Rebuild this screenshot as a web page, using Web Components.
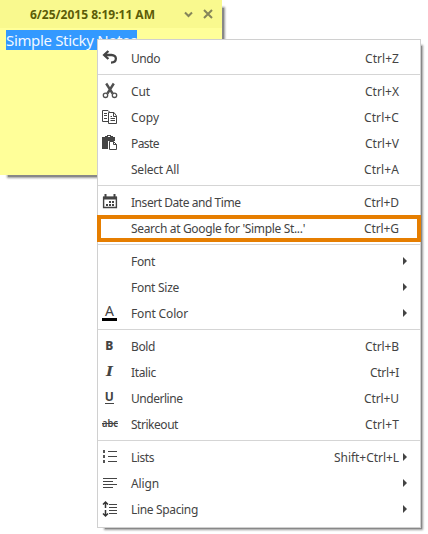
<!DOCTYPE html>
<html lang="en"><head><meta charset="utf-8"><title>Simple Sticky Notes</title>
<style>
body{margin:0;background:#fff;width:428px;height:534px;overflow:hidden;position:relative;font-family:"Noto Sans","Open Sans",sans-serif;color:#444}
context-menu{position:absolute;left:97px;top:39px}
</style></head><body>
<sticky-note heading="6/25/2015 8:19:11 AM" w="125"><span>Simple Sticky Notes</span></sticky-note>
<context-menu>
<menu-row icon="undo" keys="Ctrl+Z" w="29" kw="34">Undo</menu-row>
<menu-line></menu-line>
<menu-row icon="cut" keys="Ctrl+X" w="19" kw="34">Cut</menu-row>
<menu-row icon="copy" keys="Ctrl+C" w="28" kw="35">Copy</menu-row>
<menu-row icon="paste" keys="Ctrl+V" w="28" kw="34">Paste</menu-row>
<menu-row keys="Ctrl+A" w="48" kw="35">Select All</menu-row>
<menu-line></menu-line>
<menu-row icon="calendar" keys="Ctrl+D" w="109.5" kw="35">Insert Date and Time</menu-row>
<menu-row class="hot" keys="Ctrl+G" w="174" kw="35">Search at Google for 'Simple St...'</menu-row>
<menu-line></menu-line>
<menu-row sub w="24">Font</menu-row>
<menu-row sub w="48">Font Size</menu-row>
<menu-row sub icon="color" w="57">Font Color</menu-row>
<menu-line></menu-line>
<menu-row icon="bold" keys="Ctrl+B" w="24" kw="34">Bold</menu-row>
<menu-row icon="italic" keys="Ctrl+I" w="25" kw="29">Italic</menu-row>
<menu-row icon="underline" keys="Ctrl+U" w="51.5" kw="35">Underline</menu-row>
<menu-row icon="strike" keys="Ctrl+T" w="47" kw="34">Strikeout</menu-row>
<menu-line></menu-line>
<menu-row sub icon="lists" keys="Shift+Ctrl+L" w="23" kw="65">Lists</menu-row>
<menu-row sub icon="align" w="28">Align</menu-row>
<menu-row sub icon="spacing" w="67">Line Spacing</menu-row>
</context-menu>
<script>
const ICONS={
undo:'<path d="M8.4 6 4.2 10l4.2 4" fill="none" stroke="#444" stroke-width="2.4"/><path d="M4.5 10H11.5C17.4 10 17.4 17.600 11 17.600" fill="none" stroke="#444" stroke-width="2.3"/>',
cut:'<g fill="none" stroke="#505050"><path d="M6.2 5.500 12.600 15.500M13.800 5.500 7.400 15.500" stroke-width="2.4"/><circle cx="5.500" cy="17.300" r="2.200" stroke-width="1.3"/><circle cx="14.500" cy="17.300" r="2.200" stroke-width="1.3"/></g>',
copy:'<g fill="none" stroke="#444"><path d="M8 17.500H2.500V6.500H8L10.500 9M4 9.500H7M4 11.500H7M4 14.500H7"/><path d="M8.500 8.500H14L16.500 12V19.500H8.500ZM13.500 8.500V12.500H17M10.500 12.500H12M10.500 14.500H15M10.500 16.500H15"/></g>',
paste:'<path d="M2 7h3v2h8V7h2v4H8v8H2z" fill="#444"/><path d="M5 6h2V5h4v1h2v3H5z" fill="#444"/><path d="M8 6h2v1H8z" fill="#fff"/><path d="M9.500 11.500H13.500l3 3v5H9.500zM13.500 11.500V14.500H16.500" fill="#fff" stroke="#444"/>',
calendar:'<g fill="none" stroke="#444"><path d="M3.600 8.500H16.400V18.500H3.600z" stroke-width="1.400"/><path d="M3 9H17" stroke-width="3"/><path d="M5.500 5V9M14.500 5V9" stroke-width="2"/><path d="M9 13H14M6 16H14" stroke-width="2" stroke-dasharray="2 1"/></g>',
color:'<text x="9.500" y="16" font-size="14" text-anchor="middle">A</text><path d="M2 18h15v3H2z" fill="#000"/>',
bold:'<text x="9.300" y="17" font-size="12" font-weight="800" text-anchor="middle">B</text>',
italic:'<text x="9.500" y="17" font-size="12" font-family="DejaVu Serif" font-weight="bold" font-style="italic" textLength="7" lengthAdjust="spacingAndGlyphs" text-anchor="middle">I</text>',
underline:'<text x="9.300" y="16" font-size="12" font-weight="700" text-anchor="middle">U</text><path d="M5 18h9v1H5z"/>',
strike:'<text x="2" y="16" font-size="10" font-weight="600" textLength="16" lengthAdjust="spacingAndGlyphs">abc</text><path d="M2 12h16v1H2z"/>',
lists:'<path d="M3 6h2v3H3zM3 11h2v3H3zM3 16h2v3H3z" fill="#555"/><path d="M8 7h9v1H8zM8 12h9v1H8zM8 17h9v1H8z"/>',
align:'<path d="M3 8h14v1H3zM3 11h10v1H3zM3 14h14v1H3zM3 17h10v1H3z"/>',
spacing:'<path d="M9 8h8v1H9zM9 11h8v1H9zM9 14h8v1H9zM9 17h8v1H9z"/><path d="M5.500 6V12M5.500 14V20M3 8.500 5.500 6 8 8.500M3 17.500 5.500 20 8 17.500" fill="none" stroke="#333" stroke-width="1.500"/>'};
/* Spreads letters so that a label takes the requested number of pixels. */
function fit(el,w){if(!w)return;const n=el.textContent.length||1;el.style.letterSpacing='0px';
 const d=(w-el.getBoundingClientRect().width)/n;el.style.letterSpacing=d+'px';}
customElements.define('menu-line',class extends HTMLElement{constructor(){super();this.attachShadow({mode:'open'}).innerHTML='<style>:host{display:block;height:1px;margin:3px 0;background:#d5d5d5}</style>';}});
customElements.define('menu-row',class extends HTMLElement{
connectedCallback(){const s=this.attachShadow({mode:'open'});
s.innerHTML=`<style>:host{display:flex;align-items:center;height:26px;box-sizing:border-box;padding:0 12px 0 2px;font-size:12px;line-height:26px;white-space:nowrap;position:relative}
.i{width:20px;height:26px;margin-right:11px;fill:#444;font-family:"Noto Sans"}
.l,.k{padding-top:2px}
.k{margin-left:auto;margin-right:9px}.a{width:0;height:0;margin-left:-5px;border:solid transparent;border-width:4px 0 4px 4px;border-left-color:#444;margin-right:1px}
:host(.hot)::after{content:"";position:absolute;left:-1px;right:-1px;top:0;height:27px;box-sizing:border-box;border:4px solid #e67e00}
</style><svg class="i" viewBox="0 0 20 26">${ICONS[this.getAttribute('icon')]||''}</svg><span class="l"></span><span class="k"></span>${this.hasAttribute('sub')?'<span class="a"></span>':''}`;
const l=s.querySelector('.l'),k=s.querySelector('.k');l.textContent=this.textContent;k.textContent=this.getAttribute('keys')||'';
fit(l,this.getAttribute('w'));if(k.textContent)fit(k,this.getAttribute('kw'));}});
customElements.define('context-menu',class extends HTMLElement{constructor(){super();this.attachShadow({mode:'open'}).innerHTML='<style>:host{display:block;box-sizing:border-box;width:324px;height:489px;padding:5px 0;border:1px solid #d0d0d0;background:#fff}:host::before{content:"";position:absolute;z-index:-1;left:7px;top:6px;right:-2px;bottom:-2px;box-shadow:0 0 2px 1px #999;background:#888}</style><slot></slot>';}});
customElements.define('sticky-note',class extends HTMLElement{connectedCallback(){const s=this.attachShadow({mode:'open'});
s.innerHTML=`<style>:host{display:block;width:222px;height:175px;background:#ffff99;position:relative}
:host::before{content:"";position:absolute;z-index:-1;left:8px;top:8px;right:-2px;bottom:-2px;box-shadow:0 0 2px 1px #999;background:#888}
header{display:flex;align-items:center;height:28px;background:#f9f98e;color:#5c5c08;font-size:12px;font-weight:700;padding-left:30px;box-sizing:border-box}
svg{margin-left:27px}.b{display:flex;padding:2px 6px}.t{background:#3399ff;color:#f2f8ff;font-size:15px;line-height:20px;height:20px;white-space:nowrap}</style>
<header><span class="h"></span><svg width="36" height="28" fill="none" stroke="#85855a" stroke-width="2"><path d="M3 12.500l3.500 3.500 3.500-3.500M22 10l8 8M30 10l-8 8"/></svg></header><div class="b"><span class="t"></span></div>`;
const h=s.querySelector('.h'),t=s.querySelector('.t');h.textContent=this.getAttribute('heading');t.textContent=this.textContent;fit(h,this.getAttribute('w'));fit(t,131);}});
</script></body></html>
